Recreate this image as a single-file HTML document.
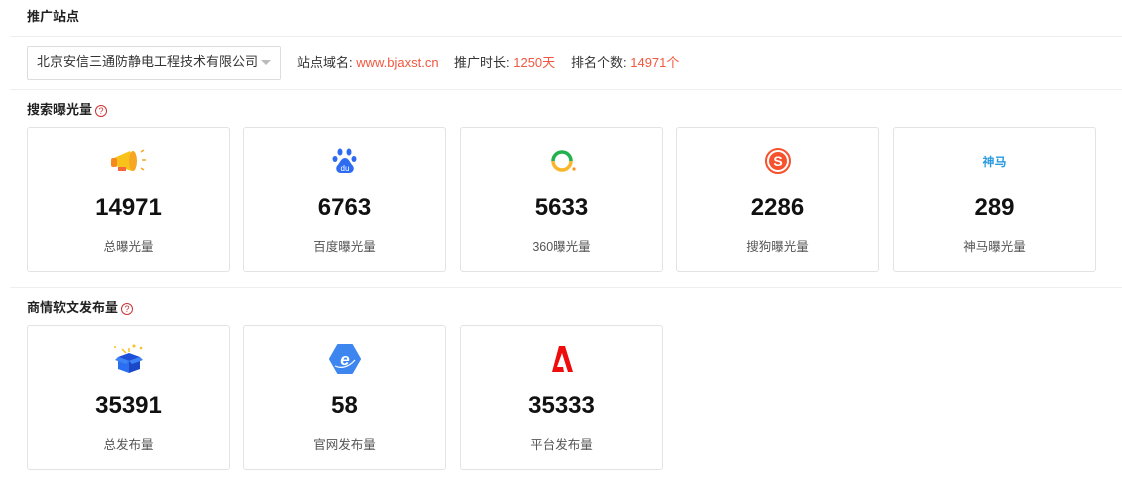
<!DOCTYPE html>
<html><head><meta charset="utf-8"><style>
*{margin:0;padding:0;box-sizing:border-box}
body{width:1122px;height:487px;background:#fff;font-family:"Liberation Sans","Noto Sans CJK SC",sans-serif;color:#333;position:relative;overflow:hidden}
.abs{position:absolute}
.t{font-size:13px;font-weight:bold;color:#222}
.line{position:absolute;height:1px;background:#eee;left:10px;right:0}
.sel{left:27px;top:46px;width:254px;height:34px;border:1px solid #ddd;border-radius:2px;font-size:13px;line-height:30px;padding-left:9px;color:#333}
.sel:after{content:"";position:absolute;right:9px;top:13px;border:5px solid transparent;border-top:5px solid #bbb}
.info{top:52px;font-size:13px;color:#333}
.info span{color:#f2573f}
.card{position:absolute;width:203px;height:145px;border:1px solid #e3e3e3;border-radius:3px;text-align:center}
.card .ic{position:absolute;left:0;right:0;top:18px;height:30px;display:flex;justify-content:center;align-items:center}
.card .n{position:absolute;left:0;right:0;top:66px;font-size:24px;font-weight:bold;color:#111}
.card .l{position:absolute;left:0;right:0;top:108px;font-size:12.5px;color:#555}
.q{display:inline-block;width:12px;height:12px;border:1px solid #c33;border-radius:50%;color:#c33;font-size:9px;line-height:10px;text-align:center;font-weight:normal;vertical-align:0px;margin-left:3px}
</style></head><body>
<div class="abs t" style="left:27px;top:6px">推广站点</div>
<div class="line" style="top:36px"></div>
<div class="abs sel">北京安信三通防静电工程技术有限公司</div>
<div class="abs info" style="left:297px">站点域名: <span>www.bjaxst.cn</span></div>
<div class="abs info" style="left:454px">推广时长: <span>1250天</span></div>
<div class="abs info" style="left:571px">排名个数: <span>14971个</span></div>
<div class="line" style="top:89px"></div>
<div class="abs t" style="left:27px;top:99px">搜索曝光量<span class="q">?</span></div>

<div class="card" style="left:27px;top:127px"><div class="ic"><svg width="42" height="30" viewBox="0 0 42 30"><path d="M6 12 L22 5 Q28 14 24 25 L8 20 Z" fill="#f8c21b"/><ellipse cx="25" cy="15" rx="4" ry="10" fill="#f5a623"/><rect x="3" y="12" width="6" height="9" rx="2" fill="#f58a1f"/><rect x="10" y="21" width="8" height="4" fill="#f5683a"/><path d="M33 6l3-2M34 14h4M33 22l3 2" stroke="#f5a623" stroke-width="1.5"/></svg></div><div class="n">14971</div><div class="l">总曝光量</div></div>

<div class="card" style="left:243px;top:127px"><div class="ic"><svg width="28" height="28" viewBox="0 0 28 28" fill="#2d6cf0"><ellipse cx="9" cy="5" rx="2.5" ry="3.5"/><ellipse cx="18" cy="5" rx="2.5" ry="3.5"/><ellipse cx="4" cy="12" rx="2.5" ry="3"/><ellipse cx="23" cy="12" rx="2.5" ry="3"/><path d="M14 11c-4 0-5 5-8 8-2 3 0 7 4 7h8c4 0 6-4 4-7-3-3-4-8-8-8z"/><text x="14" y="24" font-size="8" fill="#fff" text-anchor="middle" font-family="Liberation Sans">du</text></svg></div><div class="n">6763</div><div class="l">百度曝光量</div></div>

<div class="card" style="left:460px;top:127px"><div class="ic"><svg width="28" height="28" viewBox="0 0 28 28"><path d="M5 14a9 9 0 0 1 18 0" stroke="#22b14c" stroke-width="3.5" fill="none"/><path d="M23 14a9 9 0 0 1-18 0" stroke="#f8b72a" stroke-width="3.5" fill="none"/><circle cx="26" cy="22" r="1.6" fill="#f8931f"/></svg></div><div class="n">5633</div><div class="l">360曝光量</div></div>

<div class="card" style="left:676px;top:127px"><div class="ic"><svg width="28" height="28" viewBox="0 0 28 28"><circle cx="14" cy="14" r="12" stroke="#f5522d" stroke-width="2" fill="none"/><circle cx="14" cy="14" r="9" fill="#f5522d"/><text x="14" y="19" font-size="14" font-weight="bold" fill="#fff" text-anchor="middle" font-family="Liberation Sans">S</text></svg></div><div class="n">2286</div><div class="l">搜狗曝光量</div></div>

<div class="card" style="left:893px;top:127px"><div class="ic"><span style="color:#2a9ae0;font-size:12px;font-weight:bold">神马</span></div><div class="n">289</div><div class="l">神马曝光量</div></div>

<div class="line" style="top:287px"></div>
<div class="abs t" style="left:27px;top:297px">商情软文发布量<span class="q">?</span></div>

<div class="card" style="left:27px;top:325px"><div class="ic"><svg width="34" height="32" viewBox="0 0 34 32"><path d="M6 14l11-4 11 4-11 4z" fill="#1d4fd8"/><path d="M6 14v12l11 4V18z" fill="#2b6ff0"/><path d="M28 14v12l-11 4V18z" fill="#1a48c6"/><path d="M3 17l3-3 11 4-3 3z" fill="#3d82f5"/><path d="M31 17l-3-3-11 4 3 3z" fill="#3d82f5"/><circle cx="22" cy="3" r="1.5" fill="#f8c21b"/><circle cx="29" cy="5" r="1.3" fill="#f8c21b"/><circle cx="3" cy="4" r="1" fill="#f8c21b"/><path d="M10 6l4 4M17 5v4" stroke="#f8c21b" stroke-width="1.5"/></svg></div><div class="n">35391</div><div class="l">总发布量</div></div>

<div class="card" style="left:243px;top:325px"><div class="ic"><svg width="32" height="30" viewBox="0 0 32 30"><path d="M9 1h14l8 14-8 14H9L1 15z" fill="#3d86f0" stroke="#3d86f0" stroke-linejoin="round" stroke-width="2"/><text x="16" y="21" font-size="17" font-weight="bold" font-style="italic" fill="#fff" text-anchor="middle" font-family="Liberation Sans">e</text><path d="M6 22c6 3 14 1 20-6" stroke="#fff" stroke-width="1.2" fill="none"/></svg></div><div class="n">58</div><div class="l">官网发布量</div></div>

<div class="card" style="left:460px;top:325px"><div class="ic"><svg width="24" height="28" viewBox="0 0 24 28"><path d="M9 1h6l8 26h-5L12 8 7 22h6l1 5H2z" fill="#ee0c0c"/></svg></div><div class="n">35333</div><div class="l">平台发布量</div></div>
</body></html>
